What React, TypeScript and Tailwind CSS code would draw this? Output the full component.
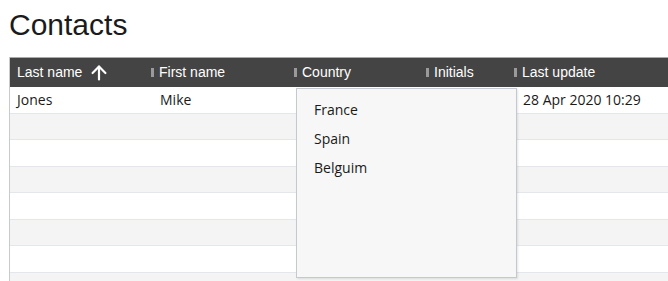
import { ArrowUp } from 'lucide-react';

const columns = [
  { label: 'Last name', width: 'w-[141px]', sorted: true },
  { label: 'First name', width: 'w-[143px]' },
  { label: 'Country', width: 'w-[132px]' },
  { label: 'Initials', width: 'w-[88px]' },
  { label: 'Last update', width: 'flex-1' },
];

const rows = [
  ['Jones', 'Mike', '', '', '28 Apr 2020 10:29'],
  ['', '', '', '', ''],
  ['', '', '', '', ''],
  ['', '', '', '', ''],
  ['', '', '', '', ''],
  ['', '', '', '', ''],
  ['', '', '', '', ''],
  ['', '', '', '', ''],
];

const countries = ['France', 'Spain', 'Belguim'];

export default function App() {
  return (
    <div className="h-[281px] w-[668px] overflow-hidden bg-white">
      <h1 className="ml-[9px] mt-[7px] text-[30px] leading-[36px] text-[#1b1b1b] [font-family:'Liberation_Sans',Arial,sans-serif]">
        Contacts
      </h1>
      <div className="relative ml-[9px] mt-[14px] border-l border-[#c9cad0]">
        <div className="flex h-[30px] items-center border-t border-[#a9a9a9] bg-[#444444] text-[14px] text-white [font-family:'Liberation_Sans',Arial,sans-serif]">
          {columns.map((col, i) => (
            <div key={col.label} className={`${col.width} flex h-full items-center`}>
              {i > 0 && <span className="h-[9px] w-[3px] bg-[#9a9a9a]" />}
              <span className={i > 0 ? 'pl-[5px]' : 'pl-[7px]'}>{col.label}</span>
              {col.sorted && <ArrowUp className="ml-[6px] h-[22px] w-[22px]" strokeWidth={2.4} />}
            </div>
          ))}
        </div>
        {rows.map((row, r) => (
          <div
            key={r}
            className={`flex h-[26.5px] items-center border-b border-[#e3e6eb] text-[14px] text-[#1a1a1a] [font-family:'Open_Sans',sans-serif] ${r % 2 === 0 ? 'bg-white' : 'bg-[#f4f4f4]'}`}
          >
            {row.map((cell, c) => (
              <div key={c} className={`${columns[c].width} ${c === 0 ? 'pl-[7px]' : 'pl-[9px]'} truncate`}>
                {cell}
              </div>
            ))}
          </div>
        ))}
        <div className="absolute left-[286px] top-[31px] h-[190px] w-[221px] border border-[#c4c8cf] bg-[#f7f7f7] pt-[6px] shadow-[1px_1px_2px_rgba(0,0,0,0.1)] [font-family:'Open_Sans',sans-serif]">
          {countries.map((name) => (
            <div key={name} className="flex h-[29px] items-center pl-[17px] text-[14px] text-[#1a1a1a]">
              {name}
            </div>
          ))}
        </div>
      </div>
    </div>
  );
}
